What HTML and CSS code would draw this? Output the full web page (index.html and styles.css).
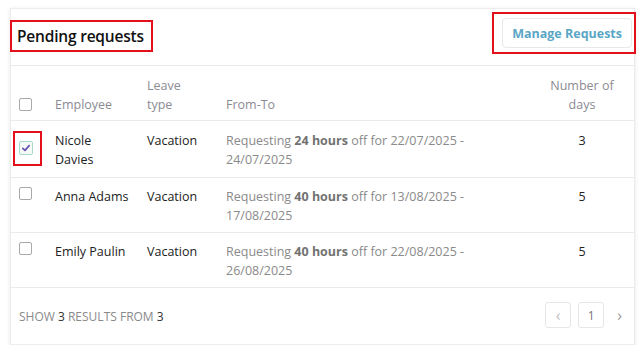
FILE: index.html
```html
<!DOCTYPE html>
<html lang="en">
<head>
<meta charset="utf-8">
<title>Pending requests</title>
<link rel="stylesheet" href="styles.css">
</head>
<body>
<div class="card">
  <div class="card-header">
    <h2 class="title">Pending requests</h2>
    <div class="btn-frame"><button class="btn-manage">Manage Requests</button></div>
  </div>
  <table class="grid">
    <colgroup>
      <col class="c-check"><col class="c-emp"><col class="c-leave"><col class="c-from"><col class="c-num">
    </colgroup>
    <thead>
      <tr>
        <th class="cell-check"><span class="box"></span></th>
        <th>Employee</th>
        <th>Leave<br>type</th>
        <th>From-To</th>
        <th class="num">Number of<br>days</th>
      </tr>
    </thead>
    <tbody>
      <tr class="first">
        <td class="cell-check"><span class="check-frame"><span class="box checked"><svg viewBox="0 0 12 12" width="10" height="10"><path d="M2.2 6.4 L4.8 8.8 L9.8 3.2" fill="none" stroke="#6a4fb0" stroke-width="2" stroke-linecap="round" stroke-linejoin="round"/></svg></span></span></td>
        <td>Nicole<br>Davies</td>
        <td>Vacation</td>
        <td class="range"><div class="range-text">Requesting <b>24 hours</b> off for 22/07/2025 -<br>24/07/2025</div></td>
        <td class="num">3</td>
      </tr>
      <tr>
        <td class="cell-check"><span class="box"></span></td>
        <td>Anna Adams</td>
        <td>Vacation</td>
        <td class="range"><div class="range-text">Requesting <b>40 hours</b> off for 13/08/2025 -<br>17/08/2025</div></td>
        <td class="num">5</td>
      </tr>
      <tr>
        <td class="cell-check"><span class="box"></span></td>
        <td>Emily Paulin</td>
        <td>Vacation</td>
        <td class="range"><div class="range-text">Requesting <b>40 hours</b> off for 22/08/2025 -<br>26/08/2025</div></td>
        <td class="num">5</td>
      </tr>
    </tbody>
  </table>
  <div class="card-footer">
    <div class="summary">SHOW <span class="n">3</span> RESULTS FROM <span class="n">3</span></div>
    <div class="pager">
      <span class="pg pg-prev">&lsaquo;</span>
      <span class="pg pg-num">1</span>
      <span class="pg-next">&rsaquo;</span>
    </div>
  </div>
</div>
</body>
</html>
```

FILE: styles.css
```css
html, body {
  margin: 0;
  padding: 0;
  background: #ffffff;
}
body {
  font-family: "Open Sans", "Noto Sans", "Liberation Sans", sans-serif;
  font-size: 12.5px;
  color: #222;
}
.card {
  margin: 8px 0 0 10px;
  width: 625px;
  background: #fff;
  border: 1px solid #ececec;
  box-shadow: 0 1px 4px rgba(0,0,0,0.10);
  box-sizing: border-box;
}
.card-header {
  display: flex;
  justify-content: space-between;
  align-items: center;
  height: 56px;
  border-bottom: 1px solid #ebebeb;
}
.title {
  margin: 0 0 2px -1px;
  font-size: 15.5px;
  font-weight: 600;
  letter-spacing: -0.2px;
  color: #111;
  line-height: 28px;
  padding: 0 7px 0 5px;
  border: 2px solid #e3101c;
}
.btn-frame {
  border: 2px solid #e3101c;
  padding: 4px 2px 4px 8px;
  margin-right: -2px;
  margin-top: -8px;
}
.btn-manage {
  display: block;
  font-family: inherit;
  font-size: 12.5px;
  font-weight: 700;
  color: #5aa6c6;
  background: #fff;
  border: 1px solid #e6e8ea;
  border-radius: 4px;
  height: 30px;
  padding: 0 9px;
}
.grid {
  width: 100%;
  border-collapse: collapse;
  table-layout: fixed;
}
.c-check { width: 44px; }
.c-emp { width: 92px; }
.c-leave { width: 79px; }
.c-from { width: 304px; }
.c-num { width: 104px; }
.grid th, .grid td {
  text-align: left;
  padding: 9px 0 7px;
  line-height: 19px;
  border-bottom: 1px solid #ebebeb;
}
.grid th {
  font-weight: 400;
  color: #8b8b93;
  vertical-align: bottom;
  padding: 10px 0 6px;
}
.grid td {
  vertical-align: top;
}
.grid tr.first td {
  padding-top: 10px;
  padding-bottom: 8px;
}
.grid .num {
  text-align: center;
}
.cell-check {
  padding-left: 8px !important;
}
.box {
  display: inline-block;
  width: 11px;
  height: 11px;
  border: 1px solid #a9a9a9;
  border-radius: 2px;
  vertical-align: middle;
  box-sizing: content-box;
}
th .box {
  margin-bottom: 3px;
}
td .box {
  margin-top: 0;
  vertical-align: top;
}
.check-frame {
  display: inline-block;
  margin: -10px 0 0 -6px;
  padding: 8px 7px 9px 4px;
  border: 2px solid #e3101c;
  line-height: 0;
}
.box.checked {
  margin-top: 0;
  width: 12px;
  height: 12px;
  border-color: #a9d9c9;
  background: #f3faf7;
  display: inline-flex;
  align-items: center;
  justify-content: center;
}
.range {
  color: #8a8a8a;
}
.range b {
  color: #727272;
  font-weight: 700;
}
.card-footer {
  display: flex;
  justify-content: space-between;
  align-items: center;
  height: 56px;
  padding: 0 8px 0 8px;
}
.summary {
  font-size: 12px;
  color: #8a8a8a;
  margin-top: 0;
}
.summary .n {
  color: #333;
}
.pager {
  display: flex;
  align-items: center;
  gap: 7px;
  margin-top: -2px;
}
.pg {
  display: flex;
  align-items: center;
  justify-content: center;
  width: 24px;
  height: 24px;
  border: 1px solid #e6e6e6;
  border-radius: 3px;
  color: #9a9a9a;
  font-size: 12px;
}
.pg-prev {
  color: #c0c0c0;
  font-size: 16px;
}
.pg-num {
  color: #777;
}
.pg-next {
  color: #9a9a9a;
  font-size: 16px;
  padding: 0 4px 0 6px;
}
```
